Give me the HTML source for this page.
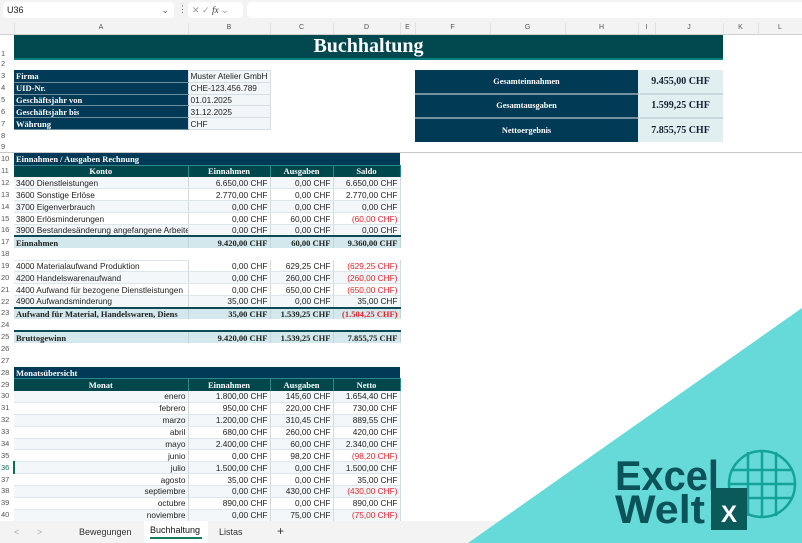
<!DOCTYPE html>
<html><head><meta charset="utf-8"><style>
*{margin:0;padding:0;box-sizing:border-box}
body{width:802px;height:543px;overflow:hidden;background:#fff;font-family:"Liberation Sans",sans-serif;position:relative}
.top{position:absolute;left:0;top:0;width:802px;height:23px;background:#f3f3f3}
.nb{position:absolute;left:3px;top:2px;width:171px;height:16px;background:#fff;border-radius:4px;font-size:9px;line-height:16px;padding-left:4px;color:#222}
.fb{position:absolute;left:188px;top:2px;width:55px;height:16px;background:#fff;border-radius:4px;font-size:9px;color:#999;line-height:16px;padding-left:4px}
.fx{position:absolute;left:247px;top:2px;width:560px;height:16px;background:#fff;border-radius:4px}
table{position:absolute;left:0;top:23px;border-collapse:collapse;table-layout:fixed;width:802px}
td{height:11.87px;font-size:8.3px;line-height:10px;white-space:nowrap;overflow:hidden;padding:0 2px;color:#222}
tr.ch td{height:11px;background:#f3f3f3;color:#555;text-align:center;font-size:7px;border-right:1px solid #e0e0e0;border-bottom:1px solid #d0d0d0}
td.rn{color:#555;font-size:7.5px;text-align:left;padding-left:1px;background:#fff}
.t{background:#00484e;color:#fff;font:bold 20px "Liberation Serif",serif;text-align:center;height:24px;border-bottom:2px solid #0b7c80}
.n{background:#003a57;color:#fff;font:bold 8.5px "Liberation Serif",serif;border-bottom:1px solid #6f8f9f}
.v{background:#f2f6f8;border:1px solid #d6e0e4}
.s{background:#003a57;color:#fff;font:bold 8.5px "Liberation Serif",serif}
.h{background:#00474c;color:#fff;font:bold 8.5px "Liberation Serif",serif;text-align:center;border-right:1px solid #2a8a8e;border-top:1px solid #2a8a8e}
.a{background:#f3f7f9;border-right:1px solid #cfdde3;border-bottom:1px solid #dde7eb}
.w{background:#fff;border-right:1px solid #cfdde3;border-bottom:1px solid #dde7eb}
.r{text-align:right}
.red{color:#e3242b}
.tot td.c{background:#d3e8ec;font:bold 8.5px "Liberation Serif",serif;border-top:2px solid #0d4a55;border-right:1px solid #c0d6dc}
.sl{background:#013a55;color:#fff;font:bold 8.3px "Liberation Serif",serif;text-align:center;border-bottom:2px solid #7590a0}
.sv{background:#e2eff1;color:#123;font:bold 10px "Liberation Serif",serif;text-align:center;border-bottom:2px solid #c8d9de}
.frz{position:absolute;left:0;top:152px;width:802px;height:1px;background:#c9c9c9}
.tabs{position:absolute;left:0;top:521px;width:802px;height:22px;background:#f3f3f3;font-size:9px;color:#333}
.tabs span{position:absolute;top:6px}
</style></head><body>
<div class="top"><div class="nb">U36<span style="position:absolute;right:5px;color:#555">⌄</span></div><div style="position:absolute;left:178px;top:4px;font-size:9px;color:#666">⋮</div><div class="fb">✕ ✓ <i style="color:#333;font-family:'Liberation Serif'">fx</i> ⌄</div><div class="fx"></div></div>
<table>
<colgroup><col style="width:14px"><col style="width:174px"><col style="width:82px"><col style="width:63px"><col style="width:67px"><col style="width:15px"><col style="width:75px"><col style="width:75px"><col style="width:73px"><col style="width:17px"><col style="width:68px"><col style="width:35px"><col style="width:44px"></colgroup>
<tr class="ch"><td></td><td>A</td><td>B</td><td>C</td><td>D</td><td>E</td><td>F</td><td>G</td><td>H</td><td>I</td><td>J</td><td>K</td><td>L</td></tr>
<tr><td class="rn" style="vertical-align:bottom">1</td><td colspan="10" class="t">Buchhaltung</td><td></td><td></td></tr>
<tr><td class="rn">2</td><td colspan="12"></td></tr>
<tr><td class="rn">3</td><td class="n">Firma</td><td class="v">Muster Atelier GmbH</td><td colspan="3"></td><td colspan="3" rowspan="2" class="sl">Gesamteinnahmen</td><td colspan="2" rowspan="2" class="sv">9.455,00 CHF</td><td colspan="2"></td></tr>
<tr><td class="rn">4</td><td class="n">UID-Nr.</td><td class="v">CHE-123.456.789</td><td colspan="3"></td><td colspan="2"></td></tr>
<tr><td class="rn">5</td><td class="n">Geschäftsjahr von</td><td class="v">01.01.2025</td><td colspan="3"></td><td colspan="3" rowspan="2" class="sl">Gesamtausgaben</td><td colspan="2" rowspan="2" class="sv">1.599,25 CHF</td><td colspan="2"></td></tr>
<tr><td class="rn">6</td><td class="n">Geschäftsjahr bis</td><td class="v">31.12.2025</td><td colspan="3"></td><td colspan="2"></td></tr>
<tr><td class="rn">7</td><td class="n">Währung</td><td class="v">CHF</td><td colspan="3"></td><td colspan="3" rowspan="2" class="sl" style="border-bottom:0">Nettoergebnis</td><td colspan="2" rowspan="2" class="sv" style="border-bottom:0">7.855,75 CHF</td><td colspan="2"></td></tr>
<tr><td class="rn">8</td><td colspan="5"></td><td colspan="2"></td></tr>
<tr><td class="rn">9</td><td colspan="12"></td></tr>
<tr><td class="rn">10</td><td colspan="4" class="s">Einnahmen / Ausgaben Rechnung</td><td colspan="8"></td></tr>
<tr><td class="rn">11</td><td class="h">Konto</td><td class="h">Einnahmen</td><td class="h">Ausgaben</td><td class="h">Saldo</td><td colspan="8"></td></tr>
<tr><td class="rn">12</td><td class="a">3400 Dienstleistungen</td><td class="a r">6.650,00 CHF</td><td class="a r">0,00 CHF</td><td class="a r">6.650,00 CHF</td><td colspan="8"></td></tr>
<tr><td class="rn">13</td><td class="w">3600 Sonstige Erlöse</td><td class="w r">2.770,00 CHF</td><td class="w r">0,00 CHF</td><td class="w r">2.770,00 CHF</td><td colspan="8"></td></tr>
<tr><td class="rn">14</td><td class="a">3700 Eigenverbrauch</td><td class="a r">0,00 CHF</td><td class="a r">0,00 CHF</td><td class="a r">0,00 CHF</td><td colspan="8"></td></tr>
<tr><td class="rn">15</td><td class="w">3800 Erlösminderungen</td><td class="w r">0,00 CHF</td><td class="w r">60,00 CHF</td><td class="w r red">(60,00 CHF)</td><td colspan="8"></td></tr>
<tr><td class="rn">16</td><td class="a">3900 Bestandesänderung angefangene Arbeiten</td><td class="a r">0,00 CHF</td><td class="a r">0,00 CHF</td><td class="a r">0,00 CHF</td><td colspan="8"></td></tr>
<tr class="tot"><td class="rn">17</td><td class="c">Einnahmen</td><td class="c r">9.420,00 CHF</td><td class="c r">60,00 CHF</td><td class="c r">9.360,00 CHF</td><td colspan="8"></td></tr>
<tr><td class="rn">18</td><td colspan="12"></td></tr>
<tr><td class="rn">19</td><td class="w" style="border-top:1px solid #dde7eb">4000 Materialaufwand Produktion</td><td class="w r">0,00 CHF</td><td class="w r">629,25 CHF</td><td class="w r red">(629,25 CHF)</td><td colspan="8"></td></tr>
<tr><td class="rn">20</td><td class="a">4200 Handelswarenaufwand</td><td class="a r">0,00 CHF</td><td class="a r">260,00 CHF</td><td class="a r red">(260,00 CHF)</td><td colspan="8"></td></tr>
<tr><td class="rn">21</td><td class="w">4400 Aufwand für bezogene Dienstleistungen</td><td class="w r">0,00 CHF</td><td class="w r">650,00 CHF</td><td class="w r red">(650,00 CHF)</td><td colspan="8"></td></tr>
<tr><td class="rn">22</td><td class="a">4900 Aufwandsminderung</td><td class="a r">35,00 CHF</td><td class="a r">0,00 CHF</td><td class="a r">35,00 CHF</td><td colspan="8"></td></tr>
<tr class="tot"><td class="rn">23</td><td class="c">Aufwand für Material, Handelswaren, Diens</td><td class="c r">35,00 CHF</td><td class="c r">1.539,25 CHF</td><td class="c r red">(1.504,25 CHF)</td><td colspan="8"></td></tr>
<tr><td class="rn">24</td><td colspan="12"></td></tr>
<tr class="tot"><td class="rn">25</td><td class="c">Bruttogewinn</td><td class="c r">9.420,00 CHF</td><td class="c r">1.539,25 CHF</td><td class="c r">7.855,75 CHF</td><td colspan="8"></td></tr>
<tr><td class="rn">26</td><td colspan="12"></td></tr>
<tr><td class="rn">27</td><td colspan="12"></td></tr>
<tr><td class="rn">28</td><td colspan="4" class="s">Monatsübersicht</td><td colspan="8"></td></tr>
<tr><td class="rn">29</td><td class="h">Monat</td><td class="h">Einnahmen</td><td class="h">Ausgaben</td><td class="h">Netto</td><td colspan="8"></td></tr>
<tr><td class="rn">30</td><td class="a r">enero</td><td class="a r">1.800,00 CHF</td><td class="a r">145,60 CHF</td><td class="a r">1.654,40 CHF</td><td colspan="8"></td></tr>
<tr><td class="rn">31</td><td class="w r">febrero</td><td class="w r">950,00 CHF</td><td class="w r">220,00 CHF</td><td class="w r">730,00 CHF</td><td colspan="8"></td></tr>
<tr><td class="rn">32</td><td class="a r">marzo</td><td class="a r">1.200,00 CHF</td><td class="a r">310,45 CHF</td><td class="a r">889,55 CHF</td><td colspan="8"></td></tr>
<tr><td class="rn">33</td><td class="w r">abril</td><td class="w r">680,00 CHF</td><td class="w r">260,00 CHF</td><td class="w r">420,00 CHF</td><td colspan="8"></td></tr>
<tr><td class="rn">34</td><td class="a r">mayo</td><td class="a r">2.400,00 CHF</td><td class="a r">60,00 CHF</td><td class="a r">2.340,00 CHF</td><td colspan="8"></td></tr>
<tr><td class="rn">35</td><td class="w r">junio</td><td class="w r">0,00 CHF</td><td class="w r">98,20 CHF</td><td class="w r red">(98,20 CHF)</td><td colspan="8"></td></tr>
<tr><td class="rn" style="color:#0e6e5e;border-right:2px solid #0e6e5e">36</td><td class="a r">julio</td><td class="a r">1.500,00 CHF</td><td class="a r">0,00 CHF</td><td class="a r">1.500,00 CHF</td><td colspan="8"></td></tr>
<tr><td class="rn">37</td><td class="w r">agosto</td><td class="w r">35,00 CHF</td><td class="w r">0,00 CHF</td><td class="w r">35,00 CHF</td><td colspan="8"></td></tr>
<tr><td class="rn">38</td><td class="a r">septiembre</td><td class="a r">0,00 CHF</td><td class="a r">430,00 CHF</td><td class="a r red">(430,00 CHF)</td><td colspan="8"></td></tr>
<tr><td class="rn">39</td><td class="w r">octubre</td><td class="w r">890,00 CHF</td><td class="w r">0,00 CHF</td><td class="w r">890,00 CHF</td><td colspan="8"></td></tr>
<tr><td class="rn">40</td><td class="a r">noviembre</td><td class="a r">0,00 CHF</td><td class="a r">75,00 CHF</td><td class="a r red">(75,00 CHF)</td><td colspan="8"></td></tr>
<tr><td class="rn">41</td><td class="w r"></td><td class="w r"></td><td class="w r"></td><td class="w r"></td><td colspan="8"></td></tr>
</table>
<div class="frz"></div>
<div class="tabs">
<span style="left:14px;color:#aaa">&lt;</span><span style="left:37px;color:#aaa">&gt;</span>
<span style="left:79px">Bewegungen</span>
<div style="position:absolute;left:144px;top:0;width:64px;height:22px;background:#fff"></div>
<span style="left:150px;top:4px;color:#111">Buchhaltung</span>
<div style="position:absolute;left:150px;top:16px;width:52px;height:2px;background:#1a7a5a"></div>
<span style="left:219px">Listas</span>
<span style="left:277px;font-size:12px;top:3px">+</span>
</div>
<svg style="position:absolute;left:0;top:0" width="802" height="543">
<polygon points="468,543 802,308 802,543" fill="#66d9d9"/>
<text x="615" y="490" font-family="Liberation Sans" font-weight="bold" font-size="42" fill="#0b5358" textLength="104" lengthAdjust="spacingAndGlyphs">Excel</text>
<text x="615" y="523" font-family="Liberation Sans" font-weight="bold" font-size="40" fill="#0b5358" textLength="90" lengthAdjust="spacingAndGlyphs">Welt</text>
<g stroke="#13a39b" stroke-width="2.5" fill="none">
<circle cx="762" cy="484" r="33"/>
<line x1="729" y1="484" x2="795" y2="484"/><line x1="732" y1="470" x2="792" y2="470"/><line x1="732" y1="498" x2="792" y2="498"/>
<line x1="748" y1="452" x2="748" y2="516"/><line x1="762" y1="451" x2="762" y2="517"/><line x1="776" y1="452" x2="776" y2="516"/>
</g>
<rect x="711" y="488" width="36" height="42" fill="#0b5a5a"/>
<text x="729" y="522" text-anchor="middle" font-family="Liberation Sans" font-weight="bold" font-size="24" fill="#fff">X</text>
</svg>
</body></html>
